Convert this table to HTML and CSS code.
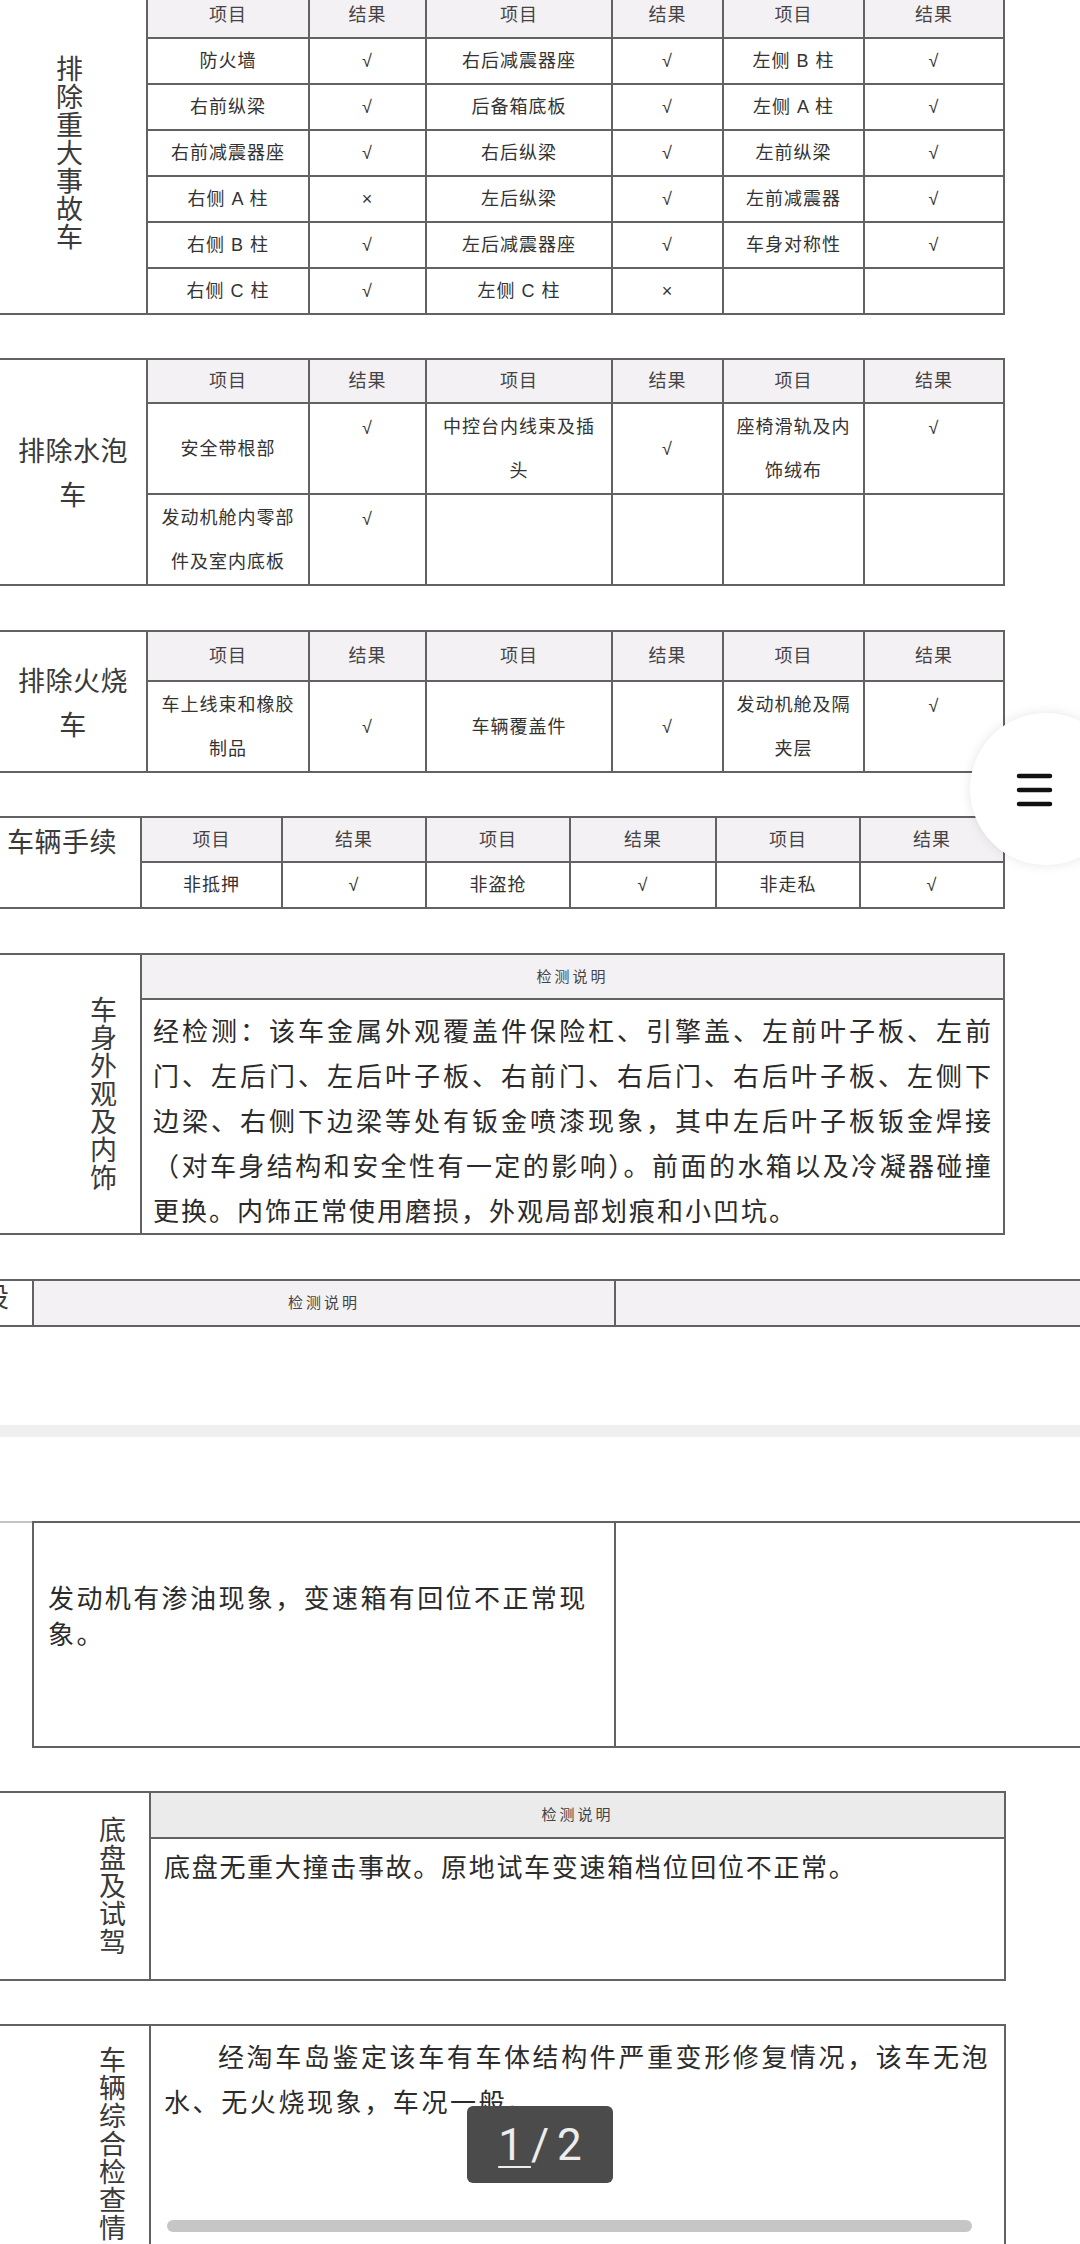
FILE: index.html
```html
<!DOCTYPE html>
<html lang="zh-CN">
<head>
<meta charset="utf-8">
<title>车辆检测报告</title>
<link rel="stylesheet" href="styles.css">
</head>
<body>
<main class="page">

  <section class="tbl cols-a s1 gap43">
    <div class="lab vert l1">排除重大事故车</div>
    <div class="hd">项目</div><div class="hd">结果</div><div class="hd">项目</div><div class="hd">结果</div><div class="hd">项目</div><div class="hd">结果</div>
    <div>防火墙</div><div>√</div><div>右后减震器座</div><div>√</div><div>左侧 B 柱</div><div>√</div>
    <div>右前纵梁</div><div>√</div><div>后备箱底板</div><div>√</div><div>左侧 A 柱</div><div>√</div>
    <div>右前减震器座</div><div>√</div><div>右后纵梁</div><div>√</div><div>左前纵梁</div><div>√</div>
    <div>右侧 A 柱</div><div>×</div><div>左后纵梁</div><div>√</div><div>左前减震器</div><div>√</div>
    <div>右侧 B 柱</div><div>√</div><div>左后减震器座</div><div>√</div><div>车身对称性</div><div>√</div>
    <div>右侧 C 柱</div><div>√</div><div>左侧 C 柱</div><div>×</div><div></div><div></div>
  </section>

  <section class="tbl cols-a s2 gap44">
    <div class="lab hz">排除水泡<br>车</div>
    <div class="hd">项目</div><div class="hd">结果</div><div class="hd">项目</div><div class="hd">结果</div><div class="hd">项目</div><div class="hd">结果</div>
    <div>安全带根部</div><div class="top">√</div><div>中控台内线束及插<br>头</div><div>√</div><div>座椅滑轨及内<br>饰绒布</div><div class="top">√</div>
    <div>发动机舱内零部<br>件及室内底板</div><div class="top">√</div><div></div><div></div><div></div><div></div>
  </section>

  <section class="tbl cols-a s3 gap43">
    <div class="lab hz">排除火烧<br>车</div>
    <div class="hd">项目</div><div class="hd">结果</div><div class="hd">项目</div><div class="hd">结果</div><div class="hd">项目</div><div class="hd">结果</div>
    <div>车上线束和橡胶<br>制品</div><div>√</div><div>车辆覆盖件</div><div>√</div><div>发动机舱及隔<br>夹层</div><div class="top">√</div>
  </section>

  <section class="tbl cols-b s4 gap44">
    <div class="lab hz left">车辆手续</div>
    <div class="hd">项目</div><div class="hd">结果</div><div class="hd">项目</div><div class="hd">结果</div><div class="hd">项目</div><div class="hd">结果</div>
    <div>非抵押</div><div>√</div><div>非盗抢</div><div>√</div><div>非走私</div><div>√</div>
  </section>

  <section class="tbl s5 gap44">
    <div class="lab vert l5">车身外观及内饰</div>
    <div class="hd small">检测说明</div>
    <div class="txt t5">
      <span class="jl">经检测：该车金属外观覆盖件保险杠、引擎盖、左前叶子板、左前</span>
      <span class="jl">门、左后门、左后叶子板、右前门、右后门、右后叶子板、左侧下</span>
      <span class="jl">边梁、右侧下边梁等处有钣金喷漆现象，其中左后叶子板钣金焊接</span>
      <span class="jl">（对车身结构和安全性有一定的影响）。前面的水箱以及冷凝器碰撞</span>
      <span class="ln">更换。内饰正常使用磨损，外观局部划痕和小凹坑。</span>
    </div>
  </section>

  <section class="tbl s6">
    <div class="cut"><span>设</span></div>
    <div class="hd small">检测说明</div>
    <div class="hd"></div>
  </section>

  <div class="band"></div>

  <section class="tbl s7 gap43">
    <div class="lc"></div>
    <div class="txt t7"><span class="ln">发动机有渗油现象，变速箱有回位不正常现</span><span class="ln">象。</span></div>
    <div></div>
  </section>

  <section class="tbl cols-c s8 gap43">
    <div class="lab vert l8">底盘及试驾</div>
    <div class="hd hd-grey small">检测说明</div>
    <div class="txt t8">底盘无重大撞击事故。原地试车变速箱档位回位不正常。</div>
  </section>

  <section class="tbl cols-c s9">
    <div class="lab vert l9">车辆综合检查情况</div>
    <div class="txt t9"><span class="ln"><span class="ind"></span>经淘车岛鉴定该车有车体结构件严重变形修复情况，该车无泡</span><span class="ln">水、无火烧现象，车况一般。</span></div>
  </section>

</main>

<div class="fab" aria-label="菜单">
  <svg class="fab-icon" width="152" height="152" viewBox="0 0 152 152">
    <line x1="49" y1="63" x2="80" y2="63"/>
    <line x1="49" y1="77" x2="80" y2="77"/>
    <line x1="49" y1="91" x2="80" y2="91"/>
  </svg>
</div>

<div class="pager"><span class="cur">1</span>/2</div>
<div class="hbar"></div>
</body>
</html>
```

FILE: styles.css
```css
* {
  box-sizing: border-box;
  margin: 0;
  padding: 0;
}

html, body {
  background: #fff;
}

body {
  width: 1080px;
  height: 2244px;
  overflow: hidden;
  font-family: "Noto Sans CJK SC", "Noto Sans", sans-serif;
  color: #333;
}

.page {
  margin-top: -9px;
}

/* table built as a grid: dark background shows through 2px gaps as rules */
.tbl {
  display: grid;
  gap: 2px;
  background: #626262;
  padding: 2px 2px 2px 0;
  width: max-content;
}

.gap43 { margin-bottom: 43px; }
.gap44 { margin-bottom: 44px; }

.tbl > div {
  background: #fff;
  display: flex;
  align-items: center;
  justify-content: center;
  text-align: center;
  font-family: "Liberation Sans", "Noto Sans CJK SC", sans-serif;
  font-size: 18px;
  letter-spacing: 1px;
  line-height: 44px;
  color: #333;
}

.tbl > .hd {
  background: #f4f1f4;
  color: #444;
}

.tbl > .hd-grey {
  background: #ebebeb;
}

.tbl > .small {
  font-size: 15px;
  letter-spacing: 3px;
}

.tbl > .top {
  align-items: flex-start;
  padding-top: 2px;
}

.cols-a { grid-template-columns: 146px 160px 115px 184px 109px 139px 138px; }
.cols-b { grid-template-columns: 140px 139px 142px 142px 144px 142px 142px; }
.cols-c { grid-template-columns: 149px 853px; }

.s1 { grid-template-rows: repeat(7, 44px); }
.s2 { grid-template-rows: 42px 89px 89px; }
.s3 { grid-template-rows: 48px 89px; }
.s4 { grid-template-rows: 43px 44px; }
.s5 { grid-template-columns: 140px 861px; grid-template-rows: 43px 233px; }
.s6 { grid-template-columns: 32px 580px 470px; grid-template-rows: 44px; margin-bottom: 98px; }
.s7 { grid-template-columns: 32px 580px 470px; grid-template-rows: 223px; }
.s8 { grid-template-rows: 44px 140px; }
.s9 { grid-template-rows: 300px; }

/* row label cell spanning all rows */
.tbl > .lab {
  grid-row: 1 / -1;
  font-family: "Noto Sans CJK SC", sans-serif;
  font-size: 27px;
  letter-spacing: 1px;
  color: #3a3a3a;
}

.tbl > .hz {
  line-height: 44px;
  letter-spacing: 0.5px;
}

.tbl > .left {
  justify-content: flex-start;
  align-items: flex-start;
  padding-left: 7px;
  line-height: 45px;
}

/* vertical labels: main axis runs top to bottom */
.tbl > .vert {
  writing-mode: vertical-rl;
  line-height: 28px;
}

.tbl > .l1 { padding-right: 8px; }
.tbl > .l5 { padding-left: 66px; }
.tbl > .l8 { padding-left: 75px; }
.tbl > .l9 {
  justify-content: flex-start;
  padding-top: 20px;
  padding-left: 75px;
}

/* long text cells */
.tbl > .txt {
  display: block;
  text-align: left;
  font-family: "Noto Sans CJK SC", sans-serif;
  font-size: 26px;
  color: #2b2b2b;
}

.tbl > .t5 {
  letter-spacing: 2px;
  line-height: 45px;
  padding: 7px 10px 0 11px;
}

.jl {
  display: block;
  white-space: nowrap;
  text-align: justify;
  text-align-last: justify;
}

.ln {
  display: block;
  white-space: nowrap;
}

.tbl > .t7 {
  letter-spacing: 2.4px;
  line-height: 36px;
  padding: 56px 0 0 14px;
}

.tbl > .t8 {
  letter-spacing: 1.7px;
  line-height: 45px;
  padding: 4px 0 0 13px;
}

.tbl > .t9 {
  letter-spacing: 2.6px;
  line-height: 45px;
  padding: 7px 0 0 13px;
}

.ind {
  display: inline-block;
  width: 54px;
}

/* clipped label at the left edge */
.tbl > .cut {
  justify-content: flex-end;
  align-items: flex-start;
  overflow: hidden;
}

.cut span {
  flex-shrink: 0;
  font-family: "Noto Sans CJK SC", sans-serif;
  font-size: 27px;
  line-height: 30px;
  margin-right: 22px;
  color: #3a3a3a;
}

.tbl > .lc {
  margin-top: -2px;
  margin-bottom: -2px;
  border-top: 2px solid #c4c4c4;
}

.band {
  width: 1080px;
  height: 12px;
  background: #efefef;
  margin-bottom: 84px;
}

/* floating overlays */
.fab {
  position: fixed;
  left: 970px;
  top: 713px;
  width: 152px;
  height: 152px;
  border-radius: 50%;
  background: #fff;
  box-shadow: 0 0 12px rgba(0, 0, 0, 0.10);
}

.fab-icon {
  display: block;
}

.fab-icon line {
  stroke: #111;
  stroke-width: 4.5;
  stroke-linecap: round;
}

.pager {
  position: fixed;
  left: 467px;
  top: 2106px;
  width: 146px;
  height: 77px;
  border-radius: 6px;
  background: #4b4b4b;
  color: #ededed;
  font-family: Roboto, "Liberation Sans", sans-serif;
  font-size: 44px;
  letter-spacing: 8px;
  padding-left: 8px;
  display: flex;
  align-items: center;
  justify-content: center;
}

.cur {
  text-decoration: underline;
  text-decoration-thickness: 2px;
  text-underline-offset: 6px;
}

.hbar {
  position: fixed;
  left: 167px;
  top: 2220px;
  width: 805px;
  height: 12px;
  border-radius: 6px;
  background: #c6c6c6;
}
```
